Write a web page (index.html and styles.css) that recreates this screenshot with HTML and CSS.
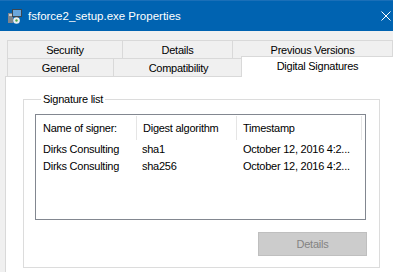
FILE: index.html
```html
<!DOCTYPE html>
<html lang="en">
<head>
  <meta charset="UTF-8">
  <title>fsforce2_setup.exe Properties</title>
  <link rel="stylesheet" href="styles.css">
</head>
<body>
  <div class="titlebar">
    <svg class="app-icon" width="16" height="16" viewBox="0 0 16 16">
      <rect x="1" y="5" width="5" height="10" fill="#7d848c"/>
      <rect x="2" y="6" width="3" height="2" fill="#c9cdd1"/>
      <rect x="5" y="1" width="10" height="8" fill="#3b4650"/>
      <rect x="6" y="2" width="8" height="6" fill="#6aa6dc"/>
      <rect x="8" y="9" width="4" height="1" fill="#3b4650"/>
      <circle cx="9.5" cy="12.5" r="3.3" fill="#e8eef2"/>
      <circle cx="9.5" cy="12.5" r="1.2" fill="#4fa64a"/>
    </svg>
    <span class="title">fsforce2_setup.exe Properties</span>
    <svg class="close" width="10" height="10" viewBox="0 0 10 10">
      <path d="M0.5 0.5 L9.5 9.5 M9.5 0.5 L0.5 9.5" stroke="#fff" stroke-width="1"/>
    </svg>
  </div>

  <div class="tabs">
    <div class="tab-row">
      <div class="tab w-security">Security</div>
      <div class="tab w-details">Details</div>
      <div class="tab w-previous last">Previous Versions</div>
    </div>
    <div class="tab-row">
      <div class="tab w-general">General</div>
      <div class="tab w-compat">Compatibility</div>
      <div class="tab w-digital active">Digital Signatures</div>
    </div>
  </div>

  <div class="panel">
    <div class="group">
      <div class="group-label">Signature list</div>
      <div class="list">
        <div class="list-head">
          <div class="col c1">Name of signer:</div>
          <div class="col c2">Digest algorithm</div>
          <div class="col c3">Timestamp</div>
        </div>
        <div class="list-row">
          <div class="col c1">Dirks Consulting</div>
          <div class="col c2">sha1</div>
          <div class="col c3">October 12, 2016 4:2...</div>
        </div>
        <div class="list-row">
          <div class="col c1">Dirks Consulting</div>
          <div class="col c2">sha256</div>
          <div class="col c3">October 12, 2016 4:2...</div>
        </div>
      </div>
      <div class="actions">
        <button class="btn" disabled>Details</button>
      </div>
    </div>
  </div>
</body>
</html>
```

FILE: styles.css
```css
html, body {
  overflow: hidden;
}
body {
  margin: 0;
  width: 393px;
  height: 272px;
  background-color: #f0f0f0;
  color: #000;
  font-family: "Liberation Sans", Arial, sans-serif;
  font-size: 11px;
  letter-spacing: -0.25px;
}

/* window title */
.titlebar {
  box-sizing: border-box;
  height: 31px;
  background-color: #0063b1;
  border-top: 1px solid #1a6fb8;
  display: flex;
  align-items: center;
  padding-left: 7px;
  color: #fff;
  letter-spacing: 0;
}
.app-icon {
  flex: none;
}
.title {
  margin-left: 5px;
  font-size: 11.5px;
}
.close {
  margin-left: auto;
  margin-right: 2px;
}

/* tabs */
.tabs {
  padding: 9px 0 0 7px;
}
.tab-row {
  display: flex;
  align-items: flex-start;
}
.tab {
  box-sizing: border-box;
  height: 18px;
  border-top: 1px solid #d9d9d9;
  border-left: 1px solid #d9d9d9;
  background-color: #f0f0f0;
  display: flex;
  align-items: center;
  justify-content: center;
  white-space: nowrap;
  flex: none;
}
.tab.last {
  border-right: 1px solid #d9d9d9;
}
.w-security { width: 115px; }
.w-details { width: 110px; }
.w-previous { width: 161px; }
.w-general { width: 106px; }
.w-compat { width: 130px; }
.w-digital { width: 153px; }
.tab.active {
  position: relative;
  z-index: 1;
  height: 21px;
  margin: -2px 0 -1px -2px;
  padding-bottom: 2px;
  background-color: #fff;
  border-right: 1px solid #d9d9d9;
}

/* page */
.panel {
  margin-left: 5px;
  height: 173px;
  background-color: #fff;
  border-top: 1px solid #d9d9d9;
  border-left: 1px solid #d9d9d9;
  padding: 22px 0 0 17px;
}
.group {
  box-sizing: border-box;
  width: 357px;
  height: 169px;
  border: 1px solid #dcdcdc;
  padding: 0 12px 0 11px;
}
.group-label {
  width: fit-content;
  margin: -8px 0 0 6px;
  padding: 0 2px;
  line-height: 14px;
  background-color: #fff;
}

/* list view */
.list {
  box-sizing: border-box;
  width: 331px;
  height: 106px;
  margin-top: 8px;
  border: 1px solid #828790;
}
.list-head {
  display: flex;
  padding-top: 1px;
}
.list-head .col {
  height: 24px;
  border-right: 1px solid #e5e5e5;
}
.list-row {
  display: flex;
}
.list-row .col {
  height: 17px;
}
.col {
  box-sizing: border-box;
  display: flex;
  align-items: center;
  white-space: nowrap;
  overflow: hidden;
  flex: none;
}
.c1 { width: 101px; padding-left: 7px; }
.c2 { width: 100px; padding-left: 6px; }
.c3 { width: 125px; padding-left: 6px; }
.list-row .c2 { padding-left: 5px; }

.actions {
  display: flex;
  justify-content: flex-end;
  margin-top: 12px;
}
.btn {
  box-sizing: border-box;
  width: 109px;
  height: 24px;
  background-color: #cccccc;
  border: 1px solid #bfbfbf;
  color: #838383;
  font-family: inherit;
  font-size: 11px;
  letter-spacing: -0.25px;
  padding: 0;
}
```
